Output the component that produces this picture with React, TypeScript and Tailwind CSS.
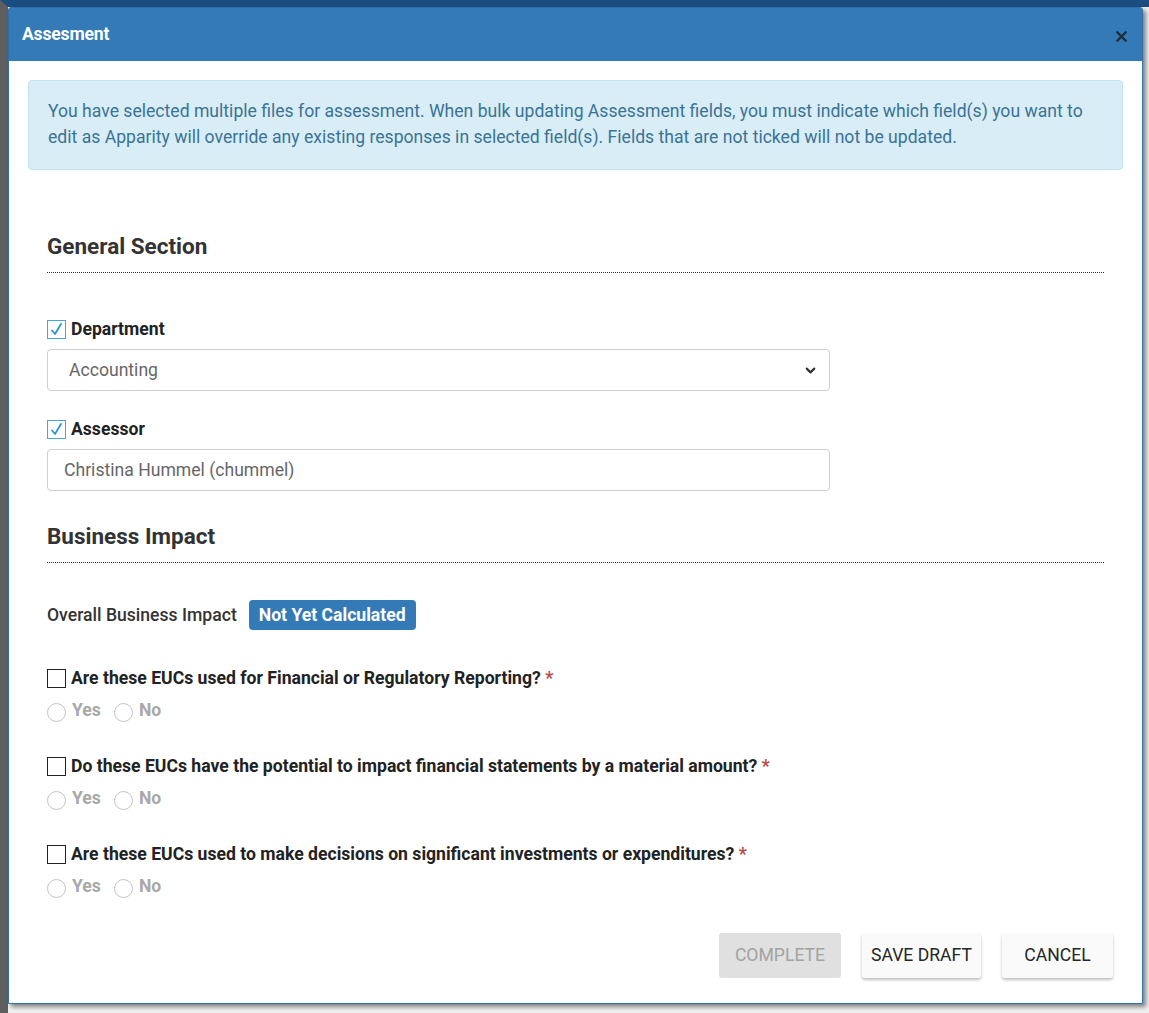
import { X, ChevronDown } from 'lucide-react'

const questions = [
  'Are these EUCs used for Financial or Regulatory Reporting?',
  'Do these EUCs have the potential to impact financial statements by a material amount?',
  'Are these EUCs used to make decisions on significant investments or expenditures?',
]

function Tick({ checked }: { checked: boolean }) {
  if (!checked) {
    return <span className="w-[19px] h-[19px] border-[1.5px] border-[#222] bg-white shrink-0" />
  }
  return (
    <span className="w-[19px] h-[19px] border-[1.5px] border-[#45a6dc] bg-white shrink-0 flex items-center justify-center">
      <svg width="13" height="13" viewBox="0 0 13 13" fill="none">
        <path d="M2 7.5 L5 11 L11 1" stroke="#2b95d2" strokeWidth="1.8" strokeLinecap="round" strokeLinejoin="round" />
      </svg>
    </span>
  )
}

function Radio({ label }: { label: string }) {
  return (
    <label className="flex items-center gap-[6px]">
      <span className="w-[19px] h-[19px] rounded-full border border-[#c4c4c4] bg-white mt-[4px]" />
      <span className="text-[17.6px] font-bold text-[#a8a8a8]">{label}</span>
    </label>
  )
}

function SectionTitle({ children }: { children: string }) {
  return (
    <div>
      <h2 className="text-[22.5px] leading-[28px] font-bold text-[#333]">{children}</h2>
      <div className="mt-[12px] border-t border-dotted border-[#333]" />
    </div>
  )
}

export default function App() {
  return (
    <div className="min-h-screen bg-[#efefef] border-t-[7px] border-t-[#1c4d80] border-l-[8px] border-l-[#5e5e5e]" style={{ fontFamily: 'Roboto, "Liberation Sans", sans-serif' }}>
      <div className="w-[1135px] h-[997px] bg-white border border-[#2f6fae] rounded-t-[3px] shadow-[3px_3px_4px_rgba(0,0,0,0.45)] flex flex-col">
        {/* header */}
        <div className="h-[53px] bg-[#337ab7] flex items-center justify-between pl-[13px] pr-[12px]">
          <span className="text-white text-[17.6px] font-bold tracking-[-0.2px]">Assesment</span>
          <X size={17} strokeWidth={3.4} color="#1d2d3d" className="mt-[4px]" />
        </div>

        <div className="px-[19px] pt-[19px] flex-1 flex flex-col">
          {/* bulk update notice */}
          <div className="h-[90px] rounded-[4px] bg-[#d9edf7] border border-[#bde5f2] px-[19px] pt-[17px] text-[17.6px] leading-[26px] text-[#3a7396]">
            You have selected multiple files for assessment. When bulk updating Assessment fields, you must indicate which field(s) you want to edit as Apparity will override any existing responses in selected field(s). Fields that are not ticked will not be updated.
          </div>

          <div className="px-[19px] pt-[62px]">
            <SectionTitle>General Section</SectionTitle>

            <div className="mt-[46px] flex items-center gap-[5px] h-[20px]">
              <Tick checked />
              <span className="text-[17.6px] font-bold text-[#222]">Department</span>
            </div>
            <div className="mt-[10px] w-[783px] h-[42px] rounded-[4px] border border-[#cfcfcf] flex items-center justify-between pl-[21px] pr-[11px]">
              <span className="text-[17.6px] text-[#666]">Accounting</span>
              <ChevronDown size={15} strokeWidth={3.4} color="#333" />
            </div>

            <div className="mt-[28px] flex items-center gap-[5px] h-[20px]">
              <Tick checked />
              <span className="text-[17.6px] font-bold text-[#222]">Assessor</span>
            </div>
            <div className="mt-[10px] w-[783px] h-[42px] rounded-[4px] border border-[#cfcfcf] flex items-center pl-[16px]">
              <span className="text-[17.6px] text-[#666]">Christina Hummel (chummel)</span>
            </div>

            <div className="mt-[31px]">
              <SectionTitle>Business Impact</SectionTitle>
            </div>

            <div className="mt-[37px] flex items-center gap-[12px] h-[30px]">
              <span className="text-[17.6px] font-medium text-[#333]">Overall Business Impact</span>
              <span className="h-[30px] px-[10px] rounded-[4px] bg-[#337ab7] text-white text-[17.6px] font-bold flex items-center">Not Yet Calculated</span>
            </div>

            <div className="mt-[38px] flex flex-col gap-[36px]">
              {questions.map(q => (
                <div key={q}>
                  <div className="flex items-center gap-[5px] h-[20px]">
                    <Tick checked={false} />
                    <span className="text-[17.6px] font-bold text-[#222]">
                      {q} <span className="text-[#b94a48]">*</span>
                    </span>
                  </div>
                  <div className="mt-[12px] flex items-center gap-[13px] h-[20px]">
                    <Radio label="Yes" />
                    <Radio label="No" />
                  </div>
                </div>
              ))}
            </div>
          </div>

          {/* actions */}
          <div className="mt-[37px] pr-[10px] flex justify-end gap-[21px]">
            <button className="h-[45px] w-[122px] rounded-[3px] bg-[#e0e0e0] text-[17.6px] text-[#a3a3a3] uppercase">Complete</button>
            <button className="h-[45px] w-[119px] rounded-[3px] bg-[#fafafa] text-[17.6px] text-[#262626] uppercase shadow-[0_2px_3px_rgba(0,0,0,0.25)]">Save Draft</button>
            <button className="h-[45px] w-[111px] rounded-[3px] bg-[#fafafa] text-[17.6px] text-[#262626] uppercase shadow-[0_2px_3px_rgba(0,0,0,0.25)]">Cancel</button>
          </div>
        </div>
      </div>
    </div>
  )
}
